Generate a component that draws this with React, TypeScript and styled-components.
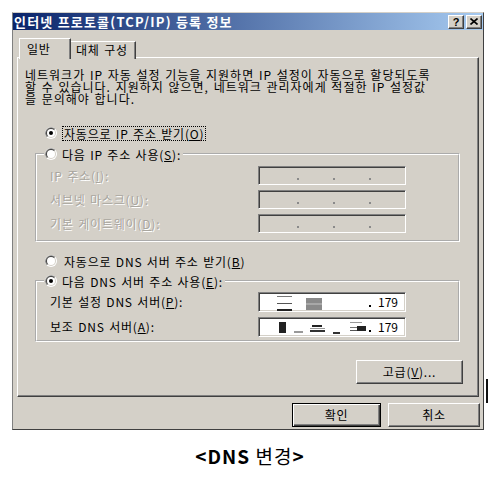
import React from 'react';
import styled, { createGlobalStyle } from 'styled-components';

const GlobalStyle = createGlobalStyle`
  html, body { margin: 0; padding: 0; background: #fff; }
  body {
    font-family: "Noto Sans CJK KR", "Noto Sans", sans-serif;
    font-size: 12px;
    color: #000;
  }
`;

const Page = styled.div`
  width: 500px;
  height: 478px;
  overflow: hidden;
  display: flex;
  flex-direction: column;
`;

const WindowRow = styled.div`
  display: flex;
  align-items: flex-end;
  margin: 12px 0 0 12px;
`;

const Window = styled.div`
  width: 472px;
  height: 418px;
  box-sizing: border-box;
  background: #d4d0c8;
  border: 1px solid;
  border-color: #d4d0c8 #404040 #404040 #808080;
  display: flex;
  flex-direction: column;
  letter-spacing: 0.8px;
  word-spacing: 1px;
`;

const TitleBar = styled.div`
  height: 17px;
  flex: 0 0 17px;
  display: flex;
  align-items: center;
  padding: 0 1px 0 1px;
  background: linear-gradient(to right, #0a246a, #a6caf0);
  color: #fff;
  font-weight: 700;
  font-size: 13px;
  letter-spacing: 1.2px;
  word-spacing: 0;
  line-height: 17px;
`;

const TitleText = styled.span`
  flex: 1;
  white-space: nowrap;
`;

const CaptionButtons = styled.div`
  display: flex;
  gap: 2px;
`;

const CaptionButton = styled.div`
  width: 16px;
  height: 14px;
  box-sizing: border-box;
  background: #d4d0c8;
  border: 1px solid;
  border-color: #fff #404040 #404040 #fff;
  box-shadow: inset -1px -1px 0 #808080;
  display: flex;
  align-items: center;
  justify-content: center;
  color: #000;
  font-family: "Liberation Sans", sans-serif;
  font-size: 11px;
  font-weight: 700;
  letter-spacing: 0;
  line-height: 12px;
`;

const Body = styled.div`
  display: flex;
  flex-direction: column;
  padding: 8px 5px 0 4px;
`;

const Tabs = styled.div`
  display: flex;
  align-items: flex-end;
  height: 21px;
  padding-left: 2px;
  margin-bottom: -2px;
  position: relative;
  z-index: 1;
`;

const Tab = styled.div<{ $active?: boolean }>`
  box-sizing: border-box;
  height: ${p => (p.$active ? 21 : 18)}px;
  width: ${p => (p.$active ? 52 : 65)}px;
  padding: ${p => (p.$active ? '2px 0 0 7px' : '0 0 0 5px')};
  background: #d4d0c8;
  border-top: 1px solid #fff;
  border-left: ${p => (p.$active ? '1px solid #fff' : 'none')};
  border-right: 1px solid #404040;
  box-shadow: inset -1px 0 0 #808080;
  line-height: 16px;
  white-space: nowrap;
`;

const Panel = styled.div`
  box-sizing: border-box;
  width: 462px;
  height: 340px;
  border: 1px solid;
  border-color: #fff #404040 #404040 #fff;
  box-shadow: inset -1px -1px 0 #808080;
  display: flex;
  flex-direction: column;
  padding-left: 7px;
`;

const Description = styled.p`
  margin: 11px 0 0 0;
  line-height: 12px;
  letter-spacing: 1px;
  white-space: nowrap;
`;

const RadioRow = styled.div<{ $top: number }>`
  display: flex;
  align-items: center;
  gap: 5px;
  height: 16px;
  margin: ${p => p.$top}px 0 0 20px;
`;

const RadioLabel = styled.span<{ $focus?: boolean }>`
  border: 1px dotted ${p => (p.$focus ? '#000' : 'transparent')};
  padding: 0 1px;
  line-height: 13px;
  white-space: nowrap;
`;

const Group = styled.fieldset<{ $top: number; $pb: number; $pt: number }>`
  box-sizing: border-box;
  width: 425px;
  margin: ${p => p.$top}px 0 0 10px;
  padding: ${p => p.$pt}px 0 ${p => p.$pb}px 7px;
  border: 2px groove #fff;
  min-width: 0;
`;

const Legend = styled.legend`
  padding: 0 2px 0 1px;
  display: flex;
  align-items: center;
  gap: 5px;
  height: 16px;
  white-space: nowrap;
`;

const FieldGrid = styled.div<{ $gap: number }>`
  display: grid;
  grid-template-columns: 208px 148px;
  row-gap: ${p => p.$gap}px;
  align-items: center;
  padding-left: 6px;
`;

const FieldLabel = styled.span<{ $disabled?: boolean }>`
  color: ${p => (p.$disabled ? '#a9a69f' : '#000')};
  text-shadow: ${p => (p.$disabled ? '1px 1px 0 #fff' : 'none')};
  white-space: nowrap;
  line-height: 14px;
`;

const IpBox = styled.div<{ $disabled?: boolean; $h: number }>`
  box-sizing: border-box;
  width: 148px;
  height: ${p => p.$h}px;
  background: ${p => (p.$disabled ? '#d4d0c8' : '#fff')};
  border: 1px solid;
  border-color: #808080 #fff #fff #808080;
  box-shadow: inset 1px 1px 0 #404040, inset -1px -1px 0 #d4d0c8;
  display: flex;
  align-items: center;
  padding-left: 4px;
  letter-spacing: 0;
`;

const Segment = styled.span`
  width: 34px;
  text-align: center;
  line-height: 14px;
`;

const Dot = styled.span<{ $disabled?: boolean }>`
  width: 2px;
  height: 2px;
  margin-top: 7px;
  background: ${p => (p.$disabled ? '#8a8a8a' : '#000')};
`;

const Button = styled.div<{ $w: number; $default?: boolean }>`
  box-sizing: border-box;
  width: ${p => p.$w}px;
  height: 24px;
  background: #d4d0c8;
  border: 1px solid;
  border-color: ${p => (p.$default ? '#000' : '#fff #404040 #404040 #fff')};
  box-shadow: ${p =>
    p.$default
      ? 'inset 1px 1px 0 #fff, inset -1px -1px 0 #404040, inset -2px -2px 0 #808080'
      : 'inset -1px -1px 0 #808080'};
  display: flex;
  align-items: center;
  justify-content: center;
  line-height: 14px;
`;

const AdvancedButton = styled(Button)`
  align-self: flex-end;
  margin: 18px 15px 0 0;
`;

const ButtonRow = styled.div`
  display: flex;
  justify-content: flex-end;
  gap: 7px;
  margin: 6px -2px 0 0;
`;

const StrayMark = styled.div`
  width: 2px;
  height: 24px;
  background: #111;
  margin: 0 0 27px 2px;
`;

const Caption = styled.div`
  width: 500px;
  text-align: center;
  margin-top: 13px;
  font-size: 19px;
  letter-spacing: 1px;
  line-height: 26px;
  font-weight: 700;
`;

const CaptionKo = styled.span`
  font-weight: 400;
`;

function Radio({ checked }: { checked?: boolean }) {
  return (
    <svg width="12" height="12" viewBox="0 0 12 12">
      <circle cx="6" cy="6" r="6" fill="#fff" />
      <path d="M1.76 10.24 A6 6 0 0 1 10.24 1.76 Z" fill="#808080" />
      <circle cx="6" cy="6" r="5" fill="#d4d0c8" />
      <path d="M2.46 9.54 A5 5 0 0 1 9.54 2.46 Z" fill="#404040" />
      <circle cx="6" cy="6" r="4" fill="#fff" />
      {checked && <circle cx="6" cy="6" r="2" fill="#000" />}
    </svg>
  );
}

function IpField({ disabled, h, children }: { disabled?: boolean; h: number; children?: React.ReactNode }) {
  if (children) {
    return (
      <IpBox $h={h}>
        {children}
        <Dot />
        <Segment>179</Segment>
      </IpBox>
    );
  }
  return (
    <IpBox $h={h} $disabled={disabled}>
      <Segment />
      <Dot $disabled={disabled} />
      <Segment />
      <Dot $disabled={disabled} />
      <Segment />
      <Dot $disabled={disabled} />
      <Segment />
    </IpBox>
  );
}

// blurred-out address digits in the DNS fields
function RedactOne() {
  return (
    <svg width="106" height="18" viewBox="0 0 106 18">
      <rect x="14" y="3" width="15" height="1" fill="#777" />
      <rect x="14" y="10" width="15" height="1" fill="#555" />
      <rect x="14" y="16" width="15" height="2" fill="#222" />
      <rect x="43" y="5" width="16" height="12" fill="#8a8a8a" />
      <rect x="43" y="10" width="16" height="2" fill="#a8a8a8" />
    </svg>
  );
}

function RedactTwo() {
  return (
    <svg width="106" height="18" viewBox="0 0 106 18">
      <rect x="16" y="4" width="7" height="11" fill="#222" />
      <rect x="31" y="13" width="9" height="2" fill="#999" />
      <rect x="49" y="7" width="10" height="2" fill="#222" />
      <rect x="47" y="10" width="15" height="1" fill="#999" />
      <rect x="47" y="12" width="15" height="2" fill="#333" />
      <rect x="70" y="14" width="7" height="2" fill="#333" />
      <rect x="87" y="4" width="12" height="1" fill="#999" />
      <rect x="87" y="9" width="8" height="1" fill="#777" />
      <rect x="87" y="12" width="8" height="1" fill="#555" />
      <rect x="94" y="8" width="9" height="5" fill="#222" />
    </svg>
  );
}

export default function App() {
  return (
    <>
      <GlobalStyle />
      <Page>
        <WindowRow>
          <Window>
            <TitleBar>
              <TitleText>인터넷 프로토콜(TCP/IP) 등록 정보</TitleText>
              <CaptionButtons>
                <CaptionButton>?</CaptionButton>
                <CaptionButton>
                  <svg width="8" height="7" viewBox="0 0 8 7">
                    <path d="M0.5 0.5 L7.5 6.5 M7.5 0.5 L0.5 6.5" stroke="#000" strokeWidth="1.6" />
                  </svg>
                </CaptionButton>
              </CaptionButtons>
            </TitleBar>
            <Body>
              <Tabs>
                <Tab $active>일반</Tab>
                <Tab>대체 구성</Tab>
              </Tabs>
              <Panel>
                <Description>
                  네트워크가 IP 자동 설정 기능을 지원하면 IP 설정이 자동으로 할당되도록
                  <br />
                  할 수 있습니다. 지원하지 않으면, 네트워크 관리자에게 적절한 IP 설정값
                  <br />을 문의해야 합니다.
                </Description>
                <RadioRow $top={20}>
                  <Radio checked />
                  <RadioLabel $focus>자동으로 IP 주소 받기(<u>O</u>)</RadioLabel>
                </RadioRow>
                <Group $top={5} $pt={4} $pb={7}>
                  <Legend>
                    <Radio />
                    <span>다음 IP 주소 사용(<u>S</u>):</span>
                  </Legend>
                  <FieldGrid $gap={5}>
                    <FieldLabel $disabled>IP 주소(<u>I</u>):</FieldLabel>
                    <IpField disabled h={19} />
                    <FieldLabel $disabled>서브넷 마스크(<u>U</u>):</FieldLabel>
                    <IpField disabled h={19} />
                    <FieldLabel $disabled>기본 게이트웨이(<u>D</u>):</FieldLabel>
                    <IpField disabled h={19} />
                  </FieldGrid>
                </Group>
                <RadioRow $top={11}>
                  <Radio />
                  <RadioLabel>자동으로 DNS 서버 주소 받기(<u>B</u>)</RadioLabel>
                </RadioRow>
                <Group $top={4} $pt={3} $pb={3}>
                  <Legend>
                    <Radio checked />
                    <span>다음 DNS 서버 주소 사용(<u>E</u>):</span>
                  </Legend>
                  <FieldGrid $gap={5}>
                    <FieldLabel>기본 설정 DNS 서버(<u>P</u>):</FieldLabel>
                    <IpField h={20}>
                      <RedactOne />
                    </IpField>
                    <FieldLabel>보조 DNS 서버(<u>A</u>):</FieldLabel>
                    <IpField h={20}>
                      <RedactTwo />
                    </IpField>
                  </FieldGrid>
                </Group>
                <AdvancedButton $w={107}>고급(<u>V</u>)...</AdvancedButton>
              </Panel>
              <ButtonRow>
                <Button $w={89} $default>확인</Button>
                <Button $w={92}>취소</Button>
              </ButtonRow>
            </Body>
          </Window>
          <StrayMark />
        </WindowRow>
        <Caption>
          &lt;DNS <CaptionKo>변경</CaptionKo>&gt;
        </Caption>
      </Page>
    </>
  );
}
